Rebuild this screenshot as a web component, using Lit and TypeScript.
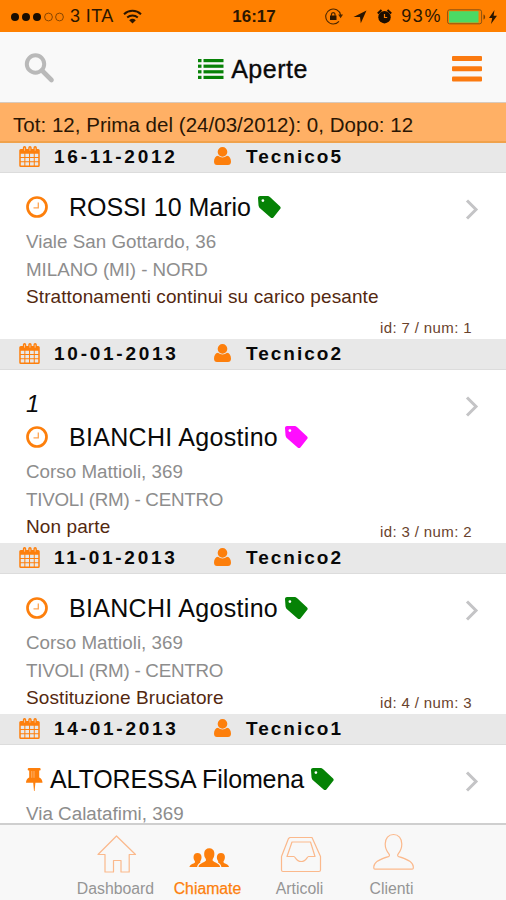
import { LitElement, html, css, svg, nothing } from "lit";
import { customElement, property } from "lit/decorators.js";
import { classMap } from "lit/directives/class-map.js";

interface Call {
  date: string;
  tech: string;
  order?: string;
  name: string;
  /** Extra tracking of the name, in px. */
  tracking: number;
  tag: "green" | "pink";
  pinned?: boolean;
  tall?: boolean;
  address: string;
  city?: string;
  cityTracking?: number;
  issue?: string;
  ref?: string;
}

const calls: Call[] = [
  {
    date: "16-11-2012", tech: "Tecnico5", name: "ROSSI 10 Mario", tracking: 0, tag: "green", tall: true,
    address: "Viale San Gottardo, 36", city: "MILANO (MI) - NORD", cityTracking: -0.05,
    issue: "Strattonamenti continui su carico pesante", ref: "id: 7 / num: 1",
  },
  {
    date: "10-01-2013", tech: "Tecnico2", order: "1", name: "BIANCHI Agostino", tracking: 0.3, tag: "pink",
    address: "Corso Mattioli, 369", city: "TIVOLI (RM) - CENTRO", cityTracking: -0.27,
    issue: "Non parte", ref: "id: 3 / num: 2",
  },
  {
    date: "11-01-2013", tech: "Tecnico2", name: "BIANCHI Agostino", tracking: 0.3, tag: "green",
    address: "Corso Mattioli, 369", city: "TIVOLI (RM) - CENTRO", cityTracking: -0.27,
    issue: "Sostituzione Bruciatore", ref: "id: 4 / num: 3",
  },
  {
    date: "14-01-2013", tech: "Tecnico1", name: "ALTORESSA Filomena", tracking: -0.12, tag: "green", pinned: true,
    address: "Via Calatafimi, 369",
  },
];

const calendarIcon = svg`
  <path fill="currentColor" fill-rule="evenodd" d="M1.500 3H3.600V1.800a1.700 1.700 0 0 1 3.400 0V3H9V1.800a1.700 1.700 0 0 1 3.400 0V3h1.800V1.800a1.700 1.700 0 0 1 3.400 0V3H19a1.500 1.500 0 0 1 1.500 1.500v15A1.500 1.500 0 0 1 19 21H1.500A1.500 1.500 0 0 1 0 19.500v-15A1.500 1.500 0 0 1 1.500 3z
    M1.500 7.800v3.200h3.600V7.800zM6.100 7.800v3.200h3.700V7.800zM10.800 7.800v3.200h3.700V7.800zM15.500 7.800v3.200h3.500V7.800z
    M1.500 12v3.300h3.600V12zM6.100 12v3.300h3.700V12zM10.800 12v3.300h3.700V12zM15.500 12v3.300h3.500V12z
    M1.500 16.300v3.200h3.600v-3.200zM6.100 16.300v3.200h3.700v-3.200zM10.800 16.300v3.200h3.700v-3.200zM15.500 16.300v3.200h3.500v-3.200z"/>
  <path d="M5.300 1.700v3M10.700 1.700v3M15.900 1.700v3" stroke="#f6d3b4" stroke-width=".8"/>`;

const userIcon = svg`
  <path fill="currentColor" d="M8.500 0a4.800 4.800 0 0 1 4.800 4.800c0 2.700-2.100 4.900-4.800 4.900S3.700 7.500 3.700 4.800A4.800 4.800 0 0 1 8.500 0z"/>
  <path fill="currentColor" d="M4 8.800a6.800 6.800 0 0 0 9 0c2.700.3 4 2.800 4 5.900 0 2-1.200 3.300-3 3.300H3c-1.800 0-3-1.300-3-3.300 0-3.100 1.300-5.600 4-5.900z"/>`;

@customElement("call-card")
export class CallCard extends LitElement {
  @property({ attribute: false }) call!: Call;

  static styles = css`
    :host { display: block; }
    svg { display: block; flex: none; }
    .strip {
      box-sizing: border-box; height: 31px; padding: 0 0 2px 19px;
      display: flex; align-items: center;
      background: #e8e8e8; border-bottom: 1px solid #dcdcdc;
      color: #080808; font-weight: 700; font-size: 19px;
    }
    .strip .icon { color: #fd7f0c; }
    .strip .person { margin-left: 14px; }
    .date, .tech { padding-top: 1px; }
    .date { width: 160px; padding-left: 14px; letter-spacing: 2.750px; box-sizing: border-box; }
    .tech { padding-left: 15px; letter-spacing: 2px; }
    .body { display: flex; justify-content: space-between; padding: 17px 34px 2px 26px; background: #fff; }
    .body.tall { min-height: 147px; }
    .order, .title { height: 34px; display: flex; align-items: center; color: #0a0a0a; font-size: 25px; }
    .order { font-style: italic; margin-bottom: -1px; font-size: 24px; }
    .title { white-space: nowrap; margin-bottom: 4px; }
    .lead { width: 43px; color: #fd7f0c; }
    .lead.pin { width: 24px; }
    .tag { margin: 0 0 0 7px; }
    .green { color: #058205; }
    .pink { color: #ff0dff; }
    .line { height: 28px; line-height: 28px; font-size: 18.800px; color: #8d8d8d; white-space: nowrap; }
    .address { letter-spacing: .02px; }
    .issue { height: 28px; line-height: 26px; font-size: 19px; letter-spacing: .1px; color: #54280f; white-space: nowrap; margin-bottom: -1px; }
    .side { display: flex; flex-direction: column; justify-content: space-between; align-items: flex-end; width: 0; }
    .chevron { margin: 9px -9px 0 0; color: #c4c4c6; }
    .ref { font-size: 15px; line-height: 20px; letter-spacing: .38px; color: #69422c; white-space: nowrap; margin-bottom: -1px; }
  `;

  render() {
    const c = this.call;
    return html`
      <div class="strip">
        <svg class="icon" width="21" height="21" viewBox="0 0 20.500 21">${calendarIcon}</svg>
        <span class="date">${c.date}</span>
        <svg class="icon person" width="17" height="18" viewBox="0 0 17 18">${userIcon}</svg>
        <span class="tech">${c.tech}</span>
      </div>
      <div class=${classMap({ body: true, tall: !!c.tall })}>
        <div>
          ${c.order ? html`<div class="order">${c.order}</div>` : nothing}
          <div class="title">
            <span class=${classMap({ lead: true, pin: !!c.pinned })}>
              ${c.pinned
                ? html`<svg width="17" height="23" viewBox="0 0 17 23"><path fill="currentColor" d="M2.600 0h11.200c1.200 0 1.200 2.600 0 2.600h-.6v7c2 .8 3.300 2.800 3.300 5.200H9.400L8.600 23H8l-.8-8.200H0c0-2.400 1.300-4.400 3.200-5.200v-7h-.6c-1.200 0-1.200-2.600 0-2.600z"/><path d="M5.800 3v6.800M8 3v6.800" stroke="#ffb878" stroke-width=".9"/></svg>`
                : html`<svg width="22" height="22" viewBox="0 0 22 22" fill="none" stroke="currentColor"><circle cx="11" cy="11" r="9.500" stroke-width="2.700"/><path d="M12.300 6.500v5.300H7.500" stroke-width="1.300" opacity=".7"/></svg>`}
            </span>
            <span style="letter-spacing:${c.tracking}px">${c.name}</span>
            <svg class="tag ${c.tag}" width="23" height="23" viewBox="0 0 23 23"><path fill="currentColor" fill-rule="evenodd" d="M2 0h7.200c1 0 2.200.5 3 1.200l9.900 9.200c.8.8.8 1.900 0 2.700l-6.700 8.300c-.8.800-2 .8-2.800 0L2 12.300C1.200 11.600.6 10.300.5 9.300L0 2C0 .9.900 0 2 0zM4.900 3.200a1.400 1.400 0 1 0 0 2.800 1.400 1.400 0 0 0 0-2.800z"/></svg>
          </div>
          <div class="line address">${c.address}</div>
          ${c.city ? html`<div class="line" style="letter-spacing:${c.cityTracking ?? 0}px">${c.city}</div>` : nothing}
          ${c.issue ? html`<div class="issue">${c.issue}</div>` : nothing}
        </div>
        <div class="side">
          <svg class="chevron" width="18" height="21" viewBox="0 0 18 21"><path d="M4 1.500l9 9-9 9" fill="none" stroke="currentColor" stroke-width="3"/></svg>
          ${c.ref ? html`<span class="ref">${c.ref}</span>` : nothing}
        </div>
      </div>`;
  }
}

@customElement("app-root")
export class AppRoot extends LitElement {
  static styles = css`
    :host {
      display: flex; flex-direction: column; width: 506px; height: 900px; overflow: hidden;
      background: #fff; font-family: "Liberation Sans", Arial, sans-serif;
    }
    svg { display: block; flex: none; }
    .status {
      height: 32px; flex: none; display: grid; grid-template-columns: 1fr auto 1fr; align-items: center;
      padding: 1px 9px 0 11px; box-sizing: border-box; background: #ff8000; color: #2b1600; font-size: 18px;
    }
    .left, .right { display: flex; align-items: center; }
    .right { justify-content: flex-end; }
    .carrier { margin: 0 9px 0 6px; letter-spacing: .4px; }
    .time { font-weight: 700; font-size: 17px; }
    .location { margin-left: 10px; }
    .alarm { margin-left: 10px; }
    .percent { margin: 0 5px 0 9px; letter-spacing: 1.600px; }
    .bolt { margin-left: 3px; }
    .nav {
      height: 71px; flex: none; box-sizing: border-box; display: grid; grid-template-columns: 1fr auto 1fr;
      align-items: center; padding: 3px 24px 0 24px; background: #f9f9f9; border-bottom: 1px solid #d8cabd;
    }
    .heading { display: flex; align-items: center; gap: 7px; font-size: 25px; letter-spacing: .5px; color: #0a0a0a; -webkit-text-stroke: .35px #0a0a0a; }
    .heading span { padding-top: 2px; }
    .menu { justify-self: end; }
    .summary {
      height: 40px; flex: none; box-sizing: border-box; padding: 4px 13px 0; line-height: 36px;
      background: #ffb065; border-bottom: 2px solid #f0a24c; color: #2a1604; font-size: 20.500px; letter-spacing: .03px; white-space: nowrap;
    }
    .list { flex: 1; min-height: 0; overflow: hidden; }
    .list call-card:first-child { margin-top: -1px; }
    .tabs {
      height: 77px; flex: none; box-sizing: border-box; display: flex; justify-content: center; padding: 8px 0 0 1px;
      background: #f8f8f8; border-top: 2px solid #cfcfcf;
    }
    .tab { width: 92px; display: flex; flex-direction: column; align-items: center; color: #959595; font-size: 15.800px; }
    .tab svg { height: 44px; width: 44px; margin-bottom: 2px; color: #fbb98c; }
    .tab .label { line-height: 20px; }
    .active { color: #fd7f0c; -webkit-text-stroke: .25px #fd7f0c; }
    .active svg { color: #fd7f0c; }
  `;

  private tab(label: string, icon: unknown, active = false) {
    return html`<div class=${classMap({ tab: true, active })}>
      <svg viewBox="0 0 44 44" fill="none" stroke="currentColor" stroke-width="1.200" stroke-linejoin="round">${icon}</svg>
      <span class="label">${label}</span>
    </div>`;
  }

  render() {
    return html`
      <div class="status">
        <div class="left">
          <svg width="53" height="10" viewBox="0 0 53 10">
            ${[4, 15, 26].map((x) => svg`<circle cx=${x} cy="5" r="4" fill="#1a0d00"/>`)}
            ${[37.5, 48.5].map((x) => svg`<circle cx=${x} cy="5" r="3.900" fill="none" stroke="#7a3f00" stroke-width=".9"/>`)}
          </svg>
          <span class="carrier">3 ITA</span>
          <svg width="19" height="15" viewBox="0 0 19 15" fill="none" stroke="#2b1600" stroke-width="2">
            <path d="M1 5.200a12.500 12.500 0 0 1 17 0M4.200 8.600a8 8 0 0 1 10.600 0"/>
            <path d="M6.200 11.200a5 5 0 0 1 6.600 0L9.500 14.600z" fill="#2b1600" stroke="none"/>
          </svg>
        </div>
        <span class="time">16:17</span>
        <div class="right">
          <svg width="18" height="17" viewBox="0 0 18 17" fill="none" stroke="#4a2600">
            <path d="M15.600 7A7.500 7.500 0 1 0 14 13.300" stroke-width="1.100"/><path d="M13.200 6.500h4.800l-2.400 3.700z" fill="#4a2600" stroke="none"/>
            <path d="M5 7.500h6.500V12H5z" fill="#2b1600" stroke="none"/><path d="M6.500 8V6a1.800 1.800 0 0 1 3.500 0v2" stroke-width="1.200"/>
          </svg>
          <svg class="location" width="14" height="14" viewBox="0 0 14 14"><path fill="#2b1600" d="M13.500.5 7.800 13.300 7 7H.5z"/></svg>
          <svg class="alarm" width="15" height="15" viewBox="0 0 15 15"><circle cx="7.500" cy="8.200" r="6.200" fill="#1a0d00"/><path d="M.8 4.500 4.500 1M14.200 4.500 10.500 1" stroke="#1a0d00" stroke-width="2"/><path d="M7.500 5v3.500h2.700" fill="none" stroke="#ff8000" stroke-width="1.200"/></svg>
          <span class="percent">93%</span>
          <svg width="39" height="16" viewBox="0 0 39 16"><rect x=".6" y=".8" width="34" height="14" rx="2" fill="none" stroke="#8a5212" stroke-width="1"/><rect x="2" y="2.200" width="29.500" height="11.400" fill="#4cd964"/><path d="M36.500 5.500c2.200.5 2.200 4.500 0 5z" fill="#7a3f00"/></svg>
          <svg class="bolt" width="8" height="14" viewBox="0 0 8 14"><path fill="#2b1600" d="M5.500 0 0 8h3.200L2 14l6-8.200H4.600z"/></svg>
        </div>
      </div>
      <div class="nav">
        <svg width="31" height="31" viewBox="0 0 31 31" fill="none" stroke="#b9b9b9"><circle cx="11.500" cy="11" r="8.700" stroke-width="4"/><path d="M18 17.500 27.500 27" stroke-width="4.600" stroke-linecap="round"/></svg>
        <div class="heading">
          <svg width="26" height="20" viewBox="0 0 26 20" fill="#078207">
            ${[0, 5.6, 11.2, 16.8].map((y) => svg`<rect y=${y} width="3.500" height="3.200"/><rect x="5.500" y=${y} width="20" height="3.200"/>`)}
          </svg>
          <span>Aperte</span>
        </div>
        <svg class="menu" width="30" height="26" viewBox="0 0 30 26" fill="#fb7a10">
          ${[0, 10.2, 20.4].map((y) => svg`<rect y=${y} width="30" height="5" rx="1"/>`)}
        </svg>
      </div>
      <div class="summary">Tot: 12, Prima del (24/03/2012): 0, Dopo: 12</div>
      <div class="list">${calls.map((c) => html`<call-card .call=${c}></call-card>`)}</div>
      <div class="tabs">
        ${this.tab("Dashboard", svg`<path d="M22.500 3 41.500 21.500h-6.300V39H27V27.500h-7.500V39h-8.500V21.500H4z"/>`)}
        ${this.tab("Chiamate", svg`<g fill="currentColor" stroke="none">
          <path d="M12.500 34c0-3.500 6-4.500 7.300-6.200.5-.9 0-2-.7-3.100-1.500-2.400-1.800-9.500 4.200-9.500s5.700 7.100 4.200 9.500c-.7 1.100-1.200 2.200-.7 3.100 1.300 1.700 7.300 2.700 7.300 6.200z"/>
          <path d="M3.500 34c0-2.800 4.300-3.200 5.400-4.600.4-.8-.2-1.400-.6-2.200-1.200-2-1.400-7.200 3.200-7.200s4.600 5.200 3.400 7.200c-.5.800-.9 1.400-.5 2.200-1.500.9-3 2.300-3.300 4.600z"/>
          <path d="M43 34c0-2.800-4.300-3.200-5.400-4.600-.4-.8.2-1.400.6-2.200 1.200-2 1.400-7.200-3.200-7.200s-4.600 5.200-3.400 7.200c.5.800.9 1.400.5 2.200 1.500.9 3 2.300 3.300 4.600z"/></g>`, true)}
        ${this.tab("Articoli", svg`<path d="M12 4.500h22L42.500 23.500V37a1.500 1.500 0 0 1-1.500 1.500H5A1.500 1.500 0 0 1 3.500 37V23.500L10.500 5.500z"/><path d="M14 9h18.500l4.500 14.500h-6.500c-1.500 0-2 5-7.300 5s-5.800-5-7.300-5H9z"/>`)}
        ${this.tab("Clienti", svg`<path d="M23.500 1.500c5 0 8.300 4 8.300 9.500 0 4-1.900 7.800-3.600 9.800-.8 1.200-.8 2.300.5 2.800 6 1.700 14.600 4.500 14.600 10.200V35a1.200 1.200 0 0 1-1.200 1.200H5A1.200 1.200 0 0 1 3.800 35v-1.200c0-5.700 8.600-8.500 14.600-10.200 1.300-.5 1.300-1.600.5-2.800-1.700-2-3.700-5.800-3.700-9.800 0-5.500 3.300-9.500 8.300-9.500z"/>`)}
      </div>`;
  }
}
